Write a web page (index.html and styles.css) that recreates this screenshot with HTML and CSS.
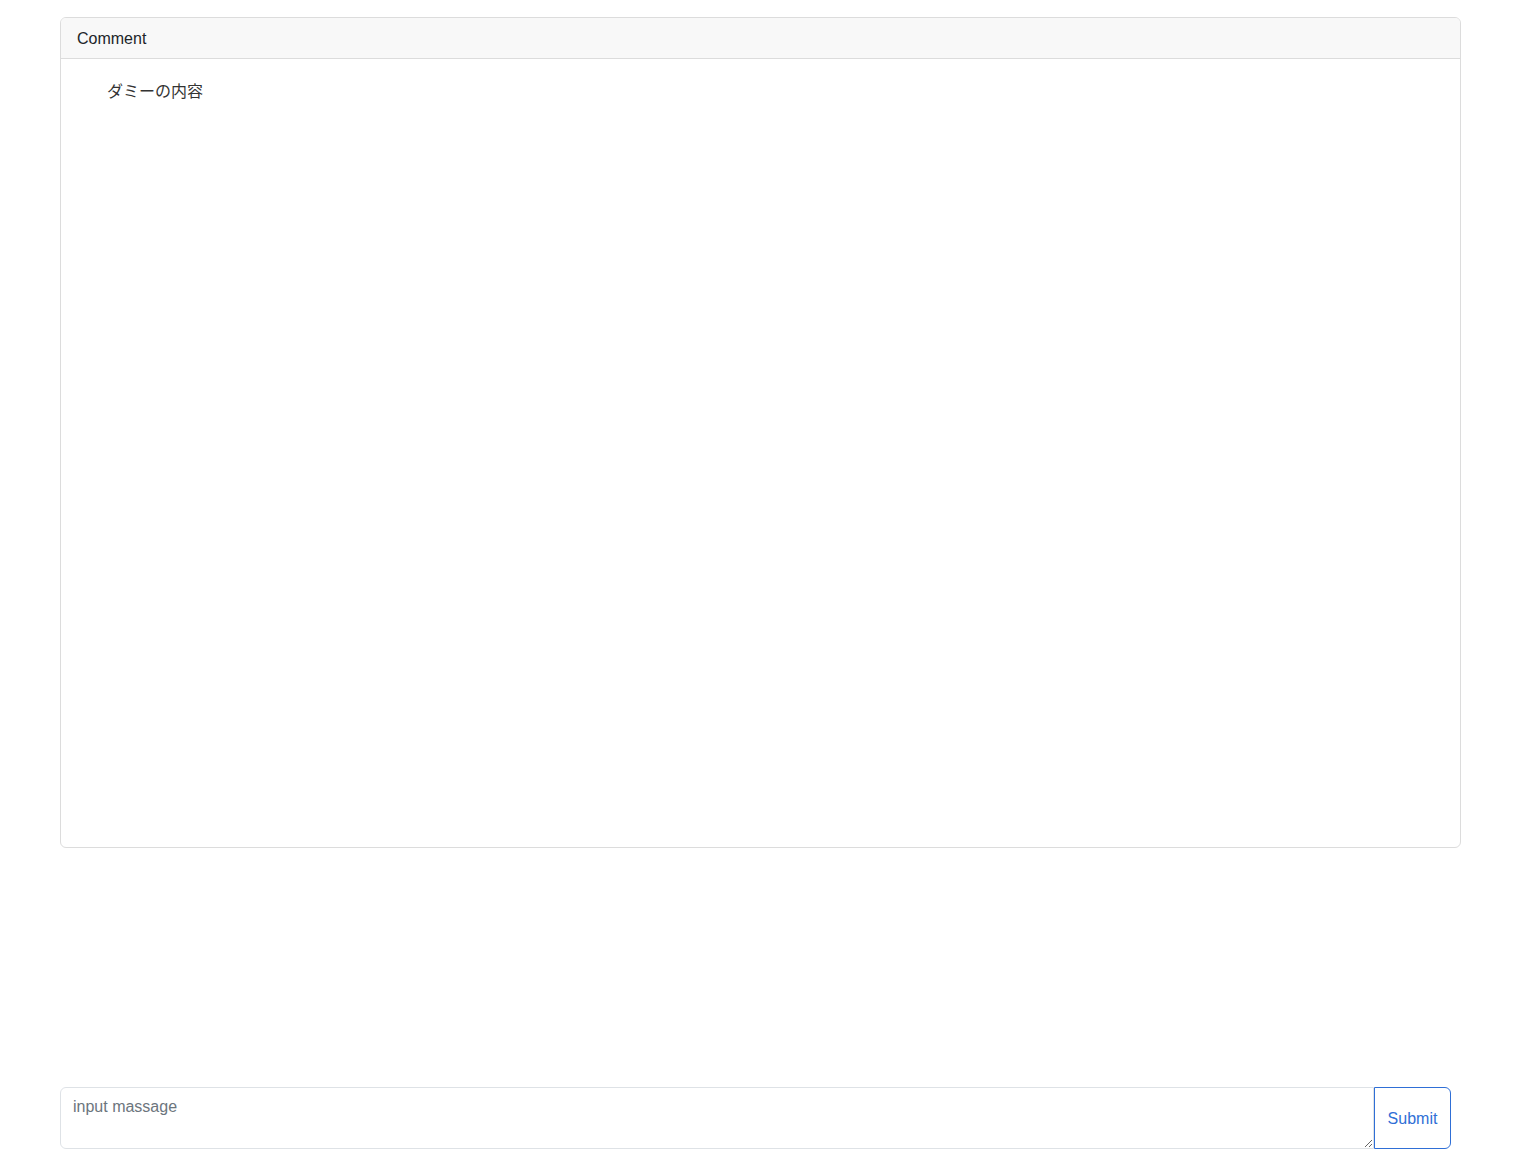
FILE: index.html
```html
<!DOCTYPE html>
<html lang="ja">
<head>
<meta charset="utf-8">
<title>Comment</title>
<link rel="stylesheet" href="styles.css">
</head>
<body>
<div class="page">
  <div class="card">
    <div class="card-header">Comment</div>
    <div class="card-body">
      <ul class="comments">
        <li>ダミーの内容</li>
      </ul>
    </div>
  </div>
  <form class="input-group">
    <textarea class="form-control" placeholder="input massage"></textarea>
    <button type="button" class="btn">Submit</button>
  </form>
</div>
</body>
</html>
```
FILE: styles.css
```css
* { box-sizing: border-box; }
html, body { margin: 0; padding: 0; }
body {
  font-family: "Liberation Sans", Arial, "Noto Sans CJK JP", sans-serif;
  font-size: 16px;
  line-height: 24px;
  color: #212529;
  background: #fff;
}
.page {
  height: 100vh;
  padding: 17px 68px 15px 60px;
  display: flex;
  flex-direction: column;
}
.card {
  height: 831px;
  border: 1px solid #dcdcdc;
  border-radius: 6px;
  display: flex;
  flex-direction: column;
  overflow: hidden;
}
.card-header {
  height: 41px;
  padding: 9px 16px 7px 16px;
  background: #f8f8f8;
  border-bottom: 1px solid #dcdcdc;
}
.card-body {
  flex: 1;
  padding: 19px 16px 16px 16px;
}
.comments {
  list-style: none;
  margin: 0;
  padding: 0 0 0 30px;
  font-family: "Noto Sans CJK JP", "Liberation Sans", sans-serif;
  color: #333;
}
.input-group {
  margin-top: auto;
  margin-right: 10px;
  display: flex;
  height: 62px;
}
.form-control {
  flex: 1;
  height: 62px;
  margin: 0;
  padding: 7px 12px 5px 12px;
  font-family: "Liberation Sans", Arial, sans-serif;
  font-size: 16px;
  line-height: 24px;
  color: #212529;
  border: 1px solid #dee2e6;
  border-radius: 6px 0 0 6px;
  resize: vertical;
  outline: none;
}
.form-control::placeholder { color: #6c757d; }
.btn {
  width: 77px;
  height: 62px;
  margin: 0;
  padding: 8px 12px 6px 12px;
  font-family: "Liberation Sans", Arial, sans-serif;
  font-size: 16px;
  line-height: 24px;
  color: #2f6fd6;
  background: #fff;
  border: 1px solid #2f6fd6;
  border-radius: 0 6px 6px 0;
  cursor: pointer;
}
```
